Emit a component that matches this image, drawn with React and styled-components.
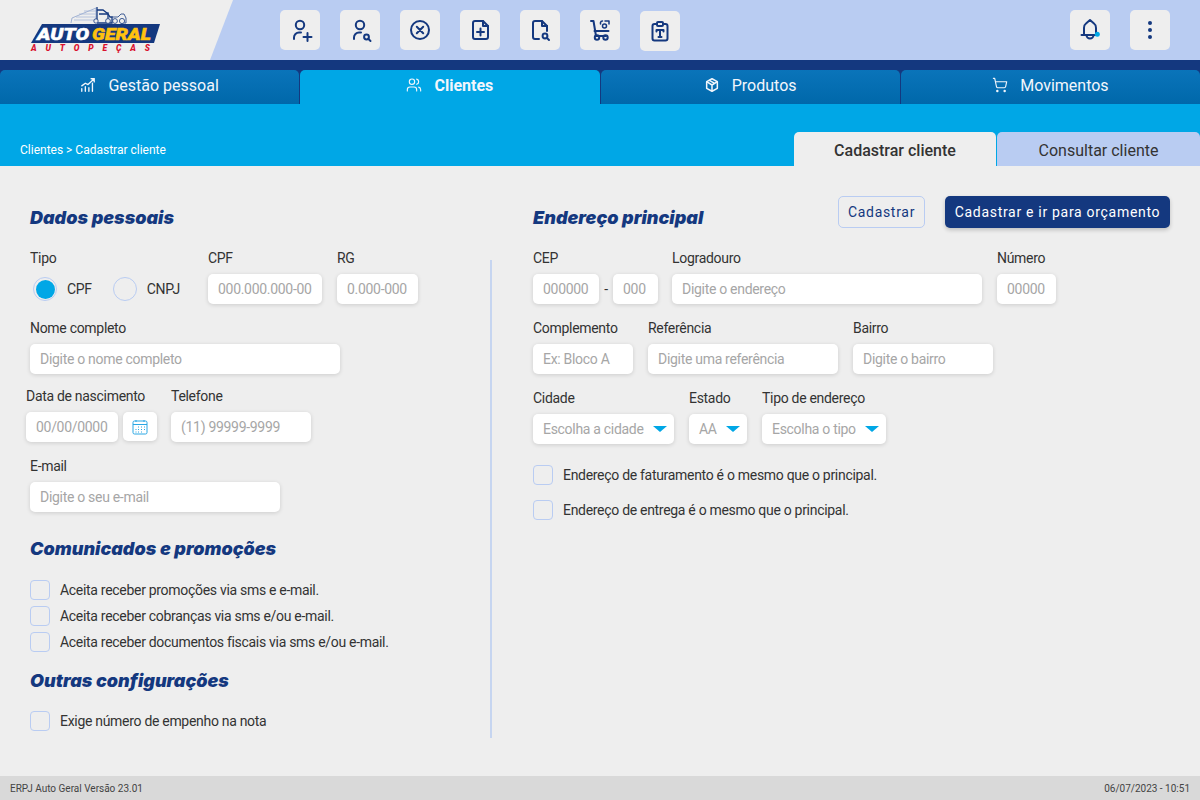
import styled, { createGlobalStyle } from "styled-components";
import { Users, ShoppingCart } from "lucide-react";

const navy = "#14387f";
const cyan = "#00a7e6";
const periwinkle = "#b9ccf2";

const GlobalStyle = createGlobalStyle`
  html, body {
    margin: 0;
    padding: 0;
    height: 100%;
    background: #eeeeee;
    font-family: Roboto, "Liberation Sans", sans-serif;
  }
  * { box-sizing: border-box; }
`;

const Page = styled.div`
  display: flex;
  flex-direction: column;
  width: 1200px;
  height: 800px;
  overflow: hidden;
  background: #eeeeee;
`;

const Header = styled.header`
  display: flex;
  align-items: center;
  height: 60px;
  flex: none;
  padding-right: 30px;
  background: ${periwinkle};
`;

const LogoPanel = styled.div`
  width: 233px;
  height: 60px;
  flex: none;
  padding: 5px 0 0 30px;
  background: #eeeeee;
  clip-path: polygon(0 0, 100% 0, 210px 100%, 0 100%);
`;

const Toolbar = styled.div`
  display: flex;
  align-items: center;
  gap: 20px;
  margin-left: ${(p) => (p.$end ? "auto" : `${p.$left || 0}px`)};
`;

const ToolButton = styled.button`
  width: 40px;
  height: 40px;
  padding: 0;
  border: 0;
  border-radius: 5px;
  background: #eeeeee;
  margin-top: ${(p) => (p.$nudge ? 2 : 0)}px;
  svg { display: block; }
`;

const Glyph = styled.svg.attrs({ width: 40, height: 40, viewBox: "0 0 40 40", fill: "none" })`
  stroke: ${navy};
  stroke-width: 2;
  stroke-linecap: round;
  stroke-linejoin: round;
`;

const NavBand = styled.nav`
  display: flex;
  gap: 1px;
  height: 44px;
  flex: none;
  padding-top: 10px;
  background: ${navy};
`;

const NavTab = styled.div`
  display: flex;
  align-items: center;
  justify-content: center;
  gap: 12px;
  flex: 1;
  padding-bottom: 4px;
  border-radius: 5px 5px 0 0;
  font-size: 16px;
  font-weight: ${(p) => (p.$active ? 700 : 400)};
  color: #f2f6fc;
  background: ${(p) => (p.$active ? cyan : "linear-gradient(#0a74ba, #0068aa)")};
`;

const SubBand = styled.div`
  display: flex;
  align-items: flex-end;
  justify-content: space-between;
  height: 62px;
  flex: none;
  padding-left: 20px;
  background: ${cyan};
`;

const Breadcrumb = styled.span`
  font-size: 12px;
  line-height: 14px;
  margin-bottom: 9px;
  color: #ffffff;
`;

const SubTabs = styled.div`
  display: flex;
  gap: 1px;
`;

const SubTab = styled.div`
  display: flex;
  align-items: center;
  justify-content: center;
  width: ${(p) => p.$width}px;
  height: 34px;
  padding-top: 2px;
  border-radius: 5px 5px 0 0;
  font-size: 16px;
  font-weight: ${(p) => (p.$active ? 500 : 400)};
  color: #333333;
  background: ${(p) => (p.$active ? "#eeeeee" : periwinkle)};
`;

const Content = styled.main`
  display: flex;
  flex: 1;
  min-height: 0;
  letter-spacing: -0.3px;
`;

const LeftColumn = styled.section`
  width: 490px;
  flex: none;
  padding: 39px 0 0 30px;
`;

const Divider = styled.div`
  width: 2px;
  height: 478px;
  flex: none;
  margin-top: 94px;
  background: #c6d5f0;
`;

const RightColumn = styled.section`
  flex: 1;
  padding: 30px 30px 0 41px;
`;

const RightTop = styled.div`
  display: flex;
  align-items: flex-start;
  justify-content: space-between;
  margin-bottom: 19px;
`;

const Actions = styled.div`
  display: flex;
  gap: 20px;
`;

const OutlineButton = styled.button`
  width: 87px;
  height: 32px;
  padding: 0;
  border: 1px solid ${periwinkle};
  border-radius: 5px;
  font: 400 14px Roboto, sans-serif;
  letter-spacing: 0.7px;
  color: ${navy};
  background: transparent;
`;

const SolidButton = styled.button`
  width: 225px;
  height: 32px;
  padding: 0;
  border: 0;
  border-radius: 5px;
  font: 400 14px Roboto, sans-serif;
  letter-spacing: 0.7px;
  color: #ffffff;
  background: ${navy};
  box-shadow: 0 2px 4px rgba(0, 0, 0, 0.2);
`;

const SectionTitle = styled.h2`
  margin: ${(p) => p.$top || 0}px 0 0;
  padding-top: ${(p) => p.$pad || 0}px;
  font-family: Inter, Roboto, sans-serif;
  font-size: 18px;
  line-height: 26px;
  font-weight: 900;
  font-style: italic;
  letter-spacing: 0;
  white-space: nowrap;
  color: ${navy};
`;

const Row = styled.div`
  display: flex;
  align-items: flex-start;
  gap: ${(p) => p.$gap || 15}px;
  margin-top: ${(p) => p.$top ?? 16}px;
  margin-left: ${(p) => p.$left || 0}px;
`;

const Field = styled.div`
  width: ${(p) => p.$width}px;
  flex: none;
`;

const Label = styled.div`
  height: 16px;
  margin-bottom: 8px;
  font-size: 14px;
  line-height: 16px;
  white-space: nowrap;
  color: #333333;
`;

const TextInput = styled.input`
  display: block;
  width: ${(p) => (p.$width ? `${p.$width}px` : "100%")};
  height: 30px;
  padding: 0 10px;
  border: 0;
  border-radius: 5px;
  font: 400 14px Roboto, sans-serif;
  letter-spacing: -0.3px;
  color: #333333;
  background: #ffffff;
  box-shadow: 0 1px 4px rgba(0, 0, 0, 0.14);
  outline: none;
  &::placeholder { color: #a6a6a6; opacity: 1; }
`;

const InlineGroup = styled.div`
  display: flex;
  align-items: flex-start;
  gap: ${(p) => p.$gap ?? 5}px;
`;

const Dash = styled.span`
  width: 14px;
  flex: none;
  line-height: 30px;
  text-align: center;
  font-size: 14px;
  color: #333333;
`;

const CalendarButton = styled.button`
  width: 34px;
  height: 29px;
  padding: 0;
  border: 0;
  border-radius: 5px;
  background: #ffffff;
  box-shadow: 0 1px 4px rgba(0, 0, 0, 0.14);
  svg { display: block; margin: auto; }
`;

const RadioRow = styled.div`
  display: flex;
  align-items: center;
  height: 30px;
  padding-left: 3px;
`;

const RadioCircle = styled.span`
  display: flex;
  align-items: center;
  justify-content: center;
  width: 24px;
  height: 24px;
  flex: none;
  border: 1px solid ${periwinkle};
  border-radius: 50%;
  &::after {
    content: "";
    display: ${(p) => (p.$on ? "block" : "none")};
    width: 19px;
    height: 19px;
    border-radius: 50%;
    background: ${cyan};
  }
`;

const RadioText = styled.span`
  margin: 0 ${(p) => p.$after || 0}px 0 10px;
  font-size: 14px;
  color: #333333;
`;

const SelectBox = styled.div`
  display: flex;
  align-items: center;
  justify-content: space-between;
  width: ${(p) => p.$width}px;
  height: 30px;
  padding: 0 7px 0 10px;
  border-radius: 5px;
  font-size: 14px;
  white-space: nowrap;
  color: #a6a6a6;
  background: #ffffff;
  box-shadow: 0 1px 4px rgba(0, 0, 0, 0.14);
  &::after {
    content: "";
    width: 0;
    height: 0;
    border-style: solid;
    border-width: 6px 7px 0;
    border-color: ${cyan} transparent transparent;
  }
`;

const CheckList = styled.div`
  display: flex;
  flex-direction: column;
  gap: ${(p) => p.$gap || 6}px;
  margin-top: ${(p) => p.$top || 0}px;
`;

const CheckRow = styled.label`
  display: flex;
  align-items: center;
  gap: 10px;
  height: 20px;
  font-size: 14px;
  line-height: 20px;
  color: #333333;
`;

const CheckBox = styled.span`
  width: 20px;
  height: 20px;
  flex: none;
  border: 1px solid ${periwinkle};
  border-radius: 4px;
`;

const Footer = styled.footer`
  display: flex;
  align-items: center;
  justify-content: space-between;
  height: 24px;
  flex: none;
  padding: 0 10px;
  font-size: 10px;
  color: #444444;
  background: #d9d9d9;
`;

function Logo() {
  return (
    <svg width="131" height="50" viewBox="30 5 131 50">
      <g fill="none" stroke={navy} strokeWidth="0.8">
        <path d="M71 23l1-5 24-10v15" stroke="#8da2cc" />
        <path d="M76 17h20M79 14h17M84 11h12M74 20h22" stroke="#a7b7d8" />
        <path d="M97 7v16M97 10h6l4 3h1v10" strokeWidth="1.3" />
        <path d="M99 14h9l2 3h2v6h-15" strokeWidth="1.3" />
        <path d="M112 17h6l3-3h3l2 4v5h-5" />
        <circle cx="96" cy="21" r="2.2" fill="#eee" />
        <circle cx="108" cy="21" r="2.4" fill="#eee" />
        <circle cx="115" cy="21" r="2.4" fill="#eee" />
        <circle cx="122" cy="21" r="2.6" fill="#eee" />
      </g>
      <polygon points="42,24 160,24 154,43 31,43" fill={navy} />
      <text x="37" y="40" textLength="52" lengthAdjust="spacingAndGlyphs" fontFamily="Roboto, sans-serif" fontWeight="900" fontStyle="italic" fontSize="17" fill="#ffffff" stroke="#ffffff" strokeWidth="0.5">
        AUTO
      </text>
      <text x="92" y="40" textLength="59" lengthAdjust="spacingAndGlyphs" fontFamily="Roboto, sans-serif" fontWeight="900" fontStyle="italic" fontSize="17" fill="#ffc20e" stroke="#ffc20e" strokeWidth="0.5">
        GERAL
      </text>
      <text x="31" y="51" textLength="119" lengthAdjust="spacing" fontFamily="Roboto, sans-serif" fontWeight="900" fontStyle="italic" fontSize="8.5" fill="#d9112e">
        AUTOPEÇAS
      </text>
    </svg>
  );
}

function UserHead() {
  return (
    <>
      <circle cx="20" cy="15" r="4.2" />
      <path d="M14 29v-1.5a5 5 0 0 1 5-5h2" />
    </>
  );
}

function Magnifier({ x, y }) {
  return (
    <>
      <circle cx={x} cy={y} r="2.4" />
      <path d={`M${x + 2} ${y + 2}l2 2`} />
    </>
  );
}

const toolIcons = [
  <>
    <UserHead />
    <path d="M23.5 27h8M27.5 23v8" />
  </>,
  <>
    <UserHead />
    <Magnifier x={26.5} y={27} />
  </>,
  <>
    <circle cx="20" cy="20" r="9" />
    <path d="M16.8 16.8l6.4 6.4M23.2 16.8l-6.4 6.4" />
  </>,
  <>
    <path d="M23 11h-8a2 2 0 0 0-2 2v14a2 2 0 0 0 2 2h11a2 2 0 0 0 2-2V16l-5-5z" />
    <path d="M23 11v5h5M20.5 18.5v7M17 22h7" />
  </>,
  <>
    <path d="M19 29h-4a2 2 0 0 1-2-2V13a2 2 0 0 1 2-2h7l5 5v5" />
    <path d="M22 11v5h5" />
    <Magnifier x={25} y={26} />
  </>,
  <>
    <path d="M11 11h2.5l2.5 15h10" />
    <path d="M14.5 21h14" />
    <circle cx="17" cy="27.5" r="2.2" />
    <circle cx="25.5" cy="27.5" r="2.2" />
    <path d="M25 11h4v3M20.5 14v-1.500a2 2 0 0 1 2-1.500" strokeWidth="1.500" />
    <circle cx="24.500" cy="16" r="2" strokeWidth="1.500" />
  </>,
  <>
    <path d="M17 13h-2.500a2 2 0 0 0-2 2v12.500a2 2 0 0 0 2 2h11a2 2 0 0 0 2-2V15a2 2 0 0 0-2-2H23" />
    <rect x="17" y="11" width="6" height="4" rx="1" />
    <path d="M16.500 19h7M16.500 19v1.500M23.500 19v1.500M20 19v7M18.500 26h3" />
  </>,
];

function GrowthIcon() {
  return (
    <svg width="16" height="16" viewBox="0 0 18 18" fill="none" stroke="#f2f6fc" strokeWidth="1.500" strokeLinecap="round" strokeLinejoin="round">
      <path d="M2 10l4-3 3 1.500L16 2M12.500 2H16v3.500" />
      <path d="M2 16v-3M6 16v-5M10 16v-4M14 16V7" />
    </svg>
  );
}

function BoxIcon() {
  return (
    <svg width="16" height="16" viewBox="0 0 18 18" fill="none" stroke="#f2f6fc" strokeWidth="1.700" strokeLinejoin="round">
      <path d="M9 2l6 3.300v7.400L9 16l-6-3.300V5.300L9 2z" />
      <path d="M3 5.300L9 9l6-3.700M9 9v7M6 3.700l6 3.500" />
    </svg>
  );
}

function CalendarIcon() {
  return (
    <svg width="16" height="16" viewBox="0 0 16 16" fill="none" stroke="#2aa7e4" strokeWidth="1">
      <rect x="1" y="2" width="14" height="13" rx="1.500" />
      <path d="M1 5.500h14M4 1v2M12 1v2" />
      <path d="M6 8h1M9 8h1M12 8h1M3.500 10.500h1M6 10.500h1M9 10.500h1M12 10.500h1M3.500 13h1M6 13h1M9 13h1" strokeWidth="1.200" />
    </svg>
  );
}

const promoChecks = [
  "Aceita receber promoções via sms e e-mail.",
  "Aceita receber cobranças via sms e/ou e-mail.",
  "Aceita receber documentos fiscais via sms e/ou e-mail.",
];

const addressChecks = [
  "Endereço de faturamento é o mesmo que o principal.",
  "Endereço de entrega é o mesmo que o principal.",
];

export default function App() {
  return (
    <Page>
      <GlobalStyle />
      <Header>
        <LogoPanel>
          <Logo />
        </LogoPanel>
        <Toolbar $left={47}>
          {toolIcons.map((icon, i) => (
            <ToolButton key={i} $nudge={i === 6}>
              <Glyph>{icon}</Glyph>
            </ToolButton>
          ))}
        </Toolbar>
        <Toolbar $end>
          <ToolButton>
            <Glyph>
              <path d="M14 25v-7a5 5 0 0 1 2-4.500l4-3.500 4 3.500a5 5 0 0 1 2 4.500v7" />
              <path d="M11.500 25h14" />
              <path d="M16.500 25a3.500 3.500 0 0 0 7 0" />
              <circle cx="27.300" cy="24.300" r="2.500" fill={cyan} stroke="none" />
            </Glyph>
          </ToolButton>
          <ToolButton>
            <Glyph>
              <circle cx="20" cy="13" r="2" fill={navy} stroke="none" />
              <circle cx="20" cy="20" r="2" fill={navy} stroke="none" />
              <circle cx="20" cy="27" r="2" fill={navy} stroke="none" />
            </Glyph>
          </ToolButton>
        </Toolbar>
      </Header>

      <NavBand>
        <NavTab>
          <GrowthIcon />
          Gestão pessoal
        </NavTab>
        <NavTab $active>
          <Users size={16} strokeWidth={1.7} />
          Clientes
        </NavTab>
        <NavTab>
          <BoxIcon />
          Produtos
        </NavTab>
        <NavTab>
          <ShoppingCart size={16} strokeWidth={1.7} />
          Movimentos
        </NavTab>
      </NavBand>

      <SubBand>
        <Breadcrumb>Clientes &gt; Cadastrar cliente</Breadcrumb>
        <SubTabs>
          <SubTab $active $width={202}>Cadastrar cliente</SubTab>
          <SubTab $width={203}>Consultar cliente</SubTab>
        </SubTabs>
      </SubBand>

      <Content>
        <LeftColumn>
          <SectionTitle>Dados pessoais</SectionTitle>
          <Row $top={19}>
            <Field $width={163}>
              <Label>Tipo</Label>
              <RadioRow>
                <RadioCircle $on />
                <RadioText $after={21}>CPF</RadioText>
                <RadioCircle />
                <RadioText>CNPJ</RadioText>
              </RadioRow>
            </Field>
            <Field $width={114}>
              <Label>CPF</Label>
              <TextInput placeholder="000.000.000-00" />
            </Field>
            <Field $width={81}>
              <Label>RG</Label>
              <TextInput placeholder="0.000-000" />
            </Field>
          </Row>
          <Row>
            <Field $width={310}>
              <Label>Nome completo</Label>
              <TextInput placeholder="Digite o nome completo" />
            </Field>
          </Row>
          <Row $top={14} $left={-4} $gap={14}>
            <Field $width={131}>
              <Label>Data de nascimento</Label>
              <InlineGroup>
                <TextInput $width={92} placeholder="00/00/0000" />
                <CalendarButton>
                  <CalendarIcon />
                </CalendarButton>
              </InlineGroup>
            </Field>
            <Field $width={140}>
              <Label>Telefone</Label>
              <TextInput placeholder="(11) 99999-9999" />
            </Field>
          </Row>
          <Row>
            <Field $width={250}>
              <Label>E-mail</Label>
              <TextInput placeholder="Digite o seu e-mail" />
            </Field>
          </Row>
          <SectionTitle $top={24}>Comunicados e promoções</SectionTitle>
          <CheckList $top={18}>
            {promoChecks.map((text) => (
              <CheckRow key={text}>
                <CheckBox />
                {text}
              </CheckRow>
            ))}
          </CheckList>
          <SectionTitle $top={16}>Outras configurações</SectionTitle>
          <CheckList $top={17}>
            <CheckRow>
              <CheckBox />
              Exige número de empenho na nota
            </CheckRow>
          </CheckList>
        </LeftColumn>

        <Divider />

        <RightColumn>
          <RightTop>
            <SectionTitle $pad={9}>Endereço principal</SectionTitle>
            <Actions>
              <OutlineButton>Cadastrar</OutlineButton>
              <SolidButton>Cadastrar e ir para orçamento</SolidButton>
            </Actions>
          </RightTop>
          <Row $top={0}>
            <Field $width={124}>
              <Label>CEP</Label>
              <InlineGroup $gap={0}>
                <TextInput $width={66} placeholder="000000" />
                <Dash>-</Dash>
                <TextInput $width={45} placeholder="000" />
              </InlineGroup>
            </Field>
            <Field $width={310}>
              <Label>Logradouro</Label>
              <TextInput placeholder="Digite o endereço" />
            </Field>
            <Field $width={59}>
              <Label>Número</Label>
              <TextInput placeholder="00000" />
            </Field>
          </Row>
          <Row>
            <Field $width={100}>
              <Label>Complemento</Label>
              <TextInput placeholder="Ex: Bloco A" />
            </Field>
            <Field $width={190}>
              <Label>Referência</Label>
              <TextInput placeholder="Digite uma referência" />
            </Field>
            <Field $width={140}>
              <Label>Bairro</Label>
              <TextInput placeholder="Digite o bairro" />
            </Field>
          </Row>
          <Row>
            <Field $width={141}>
              <Label>Cidade</Label>
              <SelectBox $width={141}>Escolha a cidade</SelectBox>
            </Field>
            <Field $width={58}>
              <Label>Estado</Label>
              <SelectBox $width={58}>AA</SelectBox>
            </Field>
            <Field $width={124}>
              <Label>Tipo de endereço</Label>
              <SelectBox $width={124}>Escolha o tipo</SelectBox>
            </Field>
          </Row>
          <CheckList $top={21} $gap={15}>
            {addressChecks.map((text) => (
              <CheckRow key={text}>
                <CheckBox />
                {text}
              </CheckRow>
            ))}
          </CheckList>
        </RightColumn>
      </Content>

      <Footer>
        <span>ERPJ Auto Geral Versão 23.01</span>
        <span>06/07/2023 - 10:51</span>
      </Footer>
    </Page>
  );
}
